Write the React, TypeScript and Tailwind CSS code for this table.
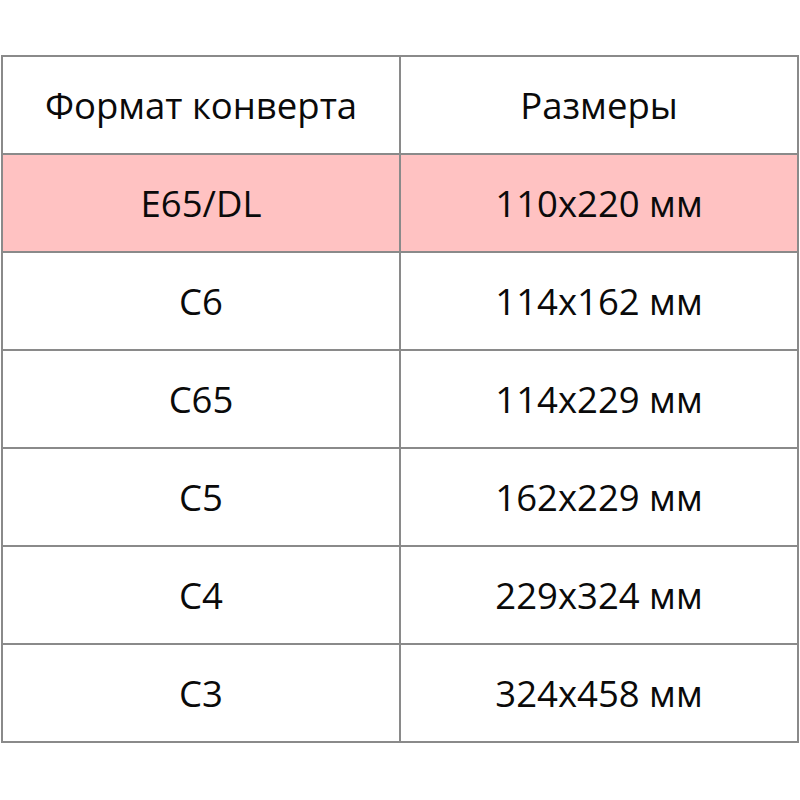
import React from "react";

const rows: [string, string][] = [
  ["E65/DL", "110x220 мм"],
  ["C6", "114x162 мм"],
  ["C65", "114x229 мм"],
  ["C5", "162x229 мм"],
  ["C4", "229x324 мм"],
  ["C3", "324x458 мм"],
];

export default function App() {
  return (
    <div className="w-[800px] h-[800px] bg-white pt-[55px] pl-[1px]" style={{ fontFamily: '"Open Sans", "Liberation Sans", sans-serif' }}>
      <div className="w-[798px] border-l-2 border-t-2 border-[#8a8a8a] text-[36.5px] leading-none text-[#0a0a0a]">
        <div className="grid grid-cols-2">
          <div className="h-[98px] flex items-center justify-center border-r-2 border-b-2 border-[#8a8a8a]">Формат конверта</div>
          <div className="h-[98px] flex items-center justify-center border-r-2 border-b-2 border-[#8a8a8a]">Размеры</div>
        </div>
        {rows.map(([a, b], i) => (
          <div key={a} className={"grid grid-cols-2 " + (i === 0 ? "bg-[#ffc2c2]" : "")}>
            <div className="h-[98px] flex items-center justify-center border-r-2 border-b-2 border-[#8a8a8a]">{a}</div>
            <div className="h-[98px] flex items-center justify-center border-r-2 border-b-2 border-[#8a8a8a]">{b}</div>
          </div>
        ))}
      </div>
    </div>
  );
}
